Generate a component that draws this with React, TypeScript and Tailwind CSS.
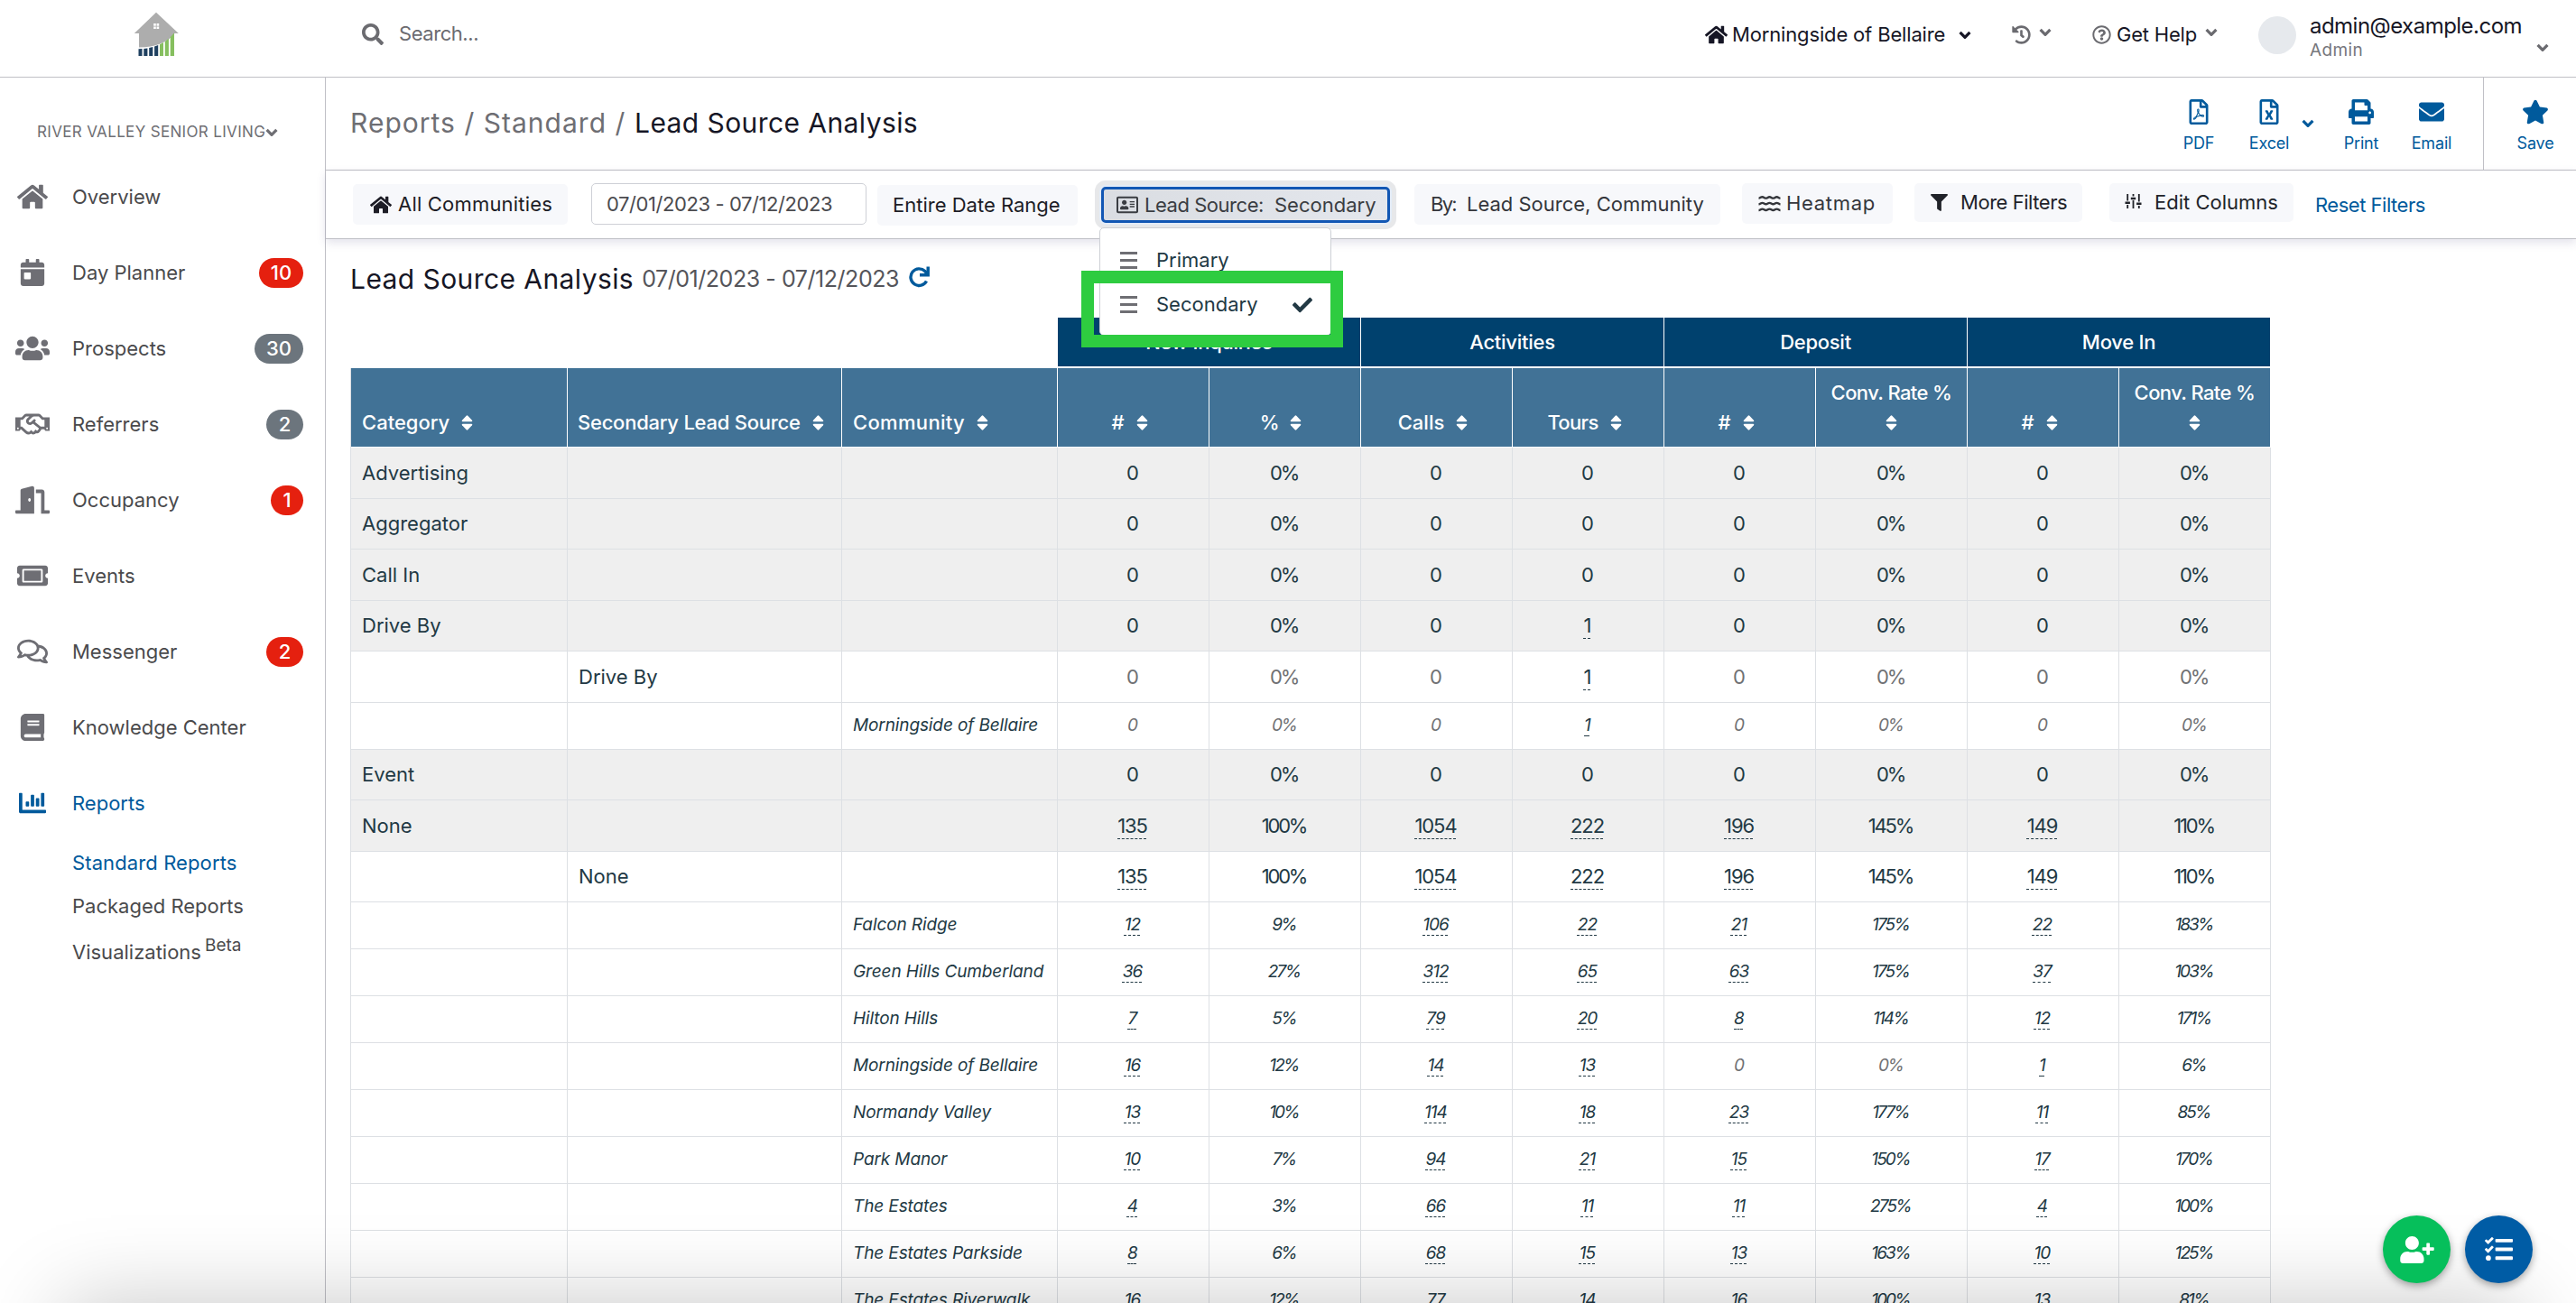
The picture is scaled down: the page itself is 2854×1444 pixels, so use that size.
import clsx from "clsx";
import type { ReactNode } from "react";
import type { IconType } from "react-icons";
import {
  FaBook,
  FaCalendarDay,
  FaChartBar,
  FaCheck,
  FaDoorOpen,
  FaEnvelope,
  FaFilter,
  FaHistory,
  FaHome,
  FaPrint,
  FaRegAddressCard,
  FaRegComments,
  FaRegFileExcel,
  FaRegFilePdf,
  FaRegHandshake,
  FaRegQuestionCircle,
  FaSearch,
  FaStar,
  FaTasks,
  FaTicketAlt,
  FaUserPlus,
  FaUsers,
} from "react-icons/fa";

type NavItem = {
  label: string;
  icon: IconType;
  iconClass: string;
  badge?: string;
  badgeClass?: string;
  active?: boolean;
};

const RED = "bg-[#e5200f]";
const GRAY = "bg-[#6c757d]";

const nav: NavItem[] = [
  { label: "Overview", icon: FaHome, iconClass: "size-[34px]" },
  { label: "Day Planner", icon: FaCalendarDay, iconClass: "size-[30px]", badge: "10", badgeClass: `${RED} w-[49px]` },
  { label: "Prospects", icon: FaUsers, iconClass: "size-[38px]", badge: "30", badgeClass: `${GRAY} w-[54px]` },
  { label: "Referrers", icon: FaRegHandshake, iconClass: "size-[38px]", badge: "2", badgeClass: `${GRAY} w-[41px]` },
  { label: "Occupancy", icon: FaDoorOpen, iconClass: "size-[38px]", badge: "1", badgeClass: `${RED} w-[36px]` },
  { label: "Events", icon: FaTicketAlt, iconClass: "size-[34px]" },
  { label: "Messenger", icon: FaRegComments, iconClass: "size-[34px]", badge: "2", badgeClass: `${RED} w-[41px]` },
  { label: "Knowledge Center", icon: FaBook, iconClass: "size-[30px]" },
  { label: "Reports", icon: FaChartBar, iconClass: "size-[30px]", active: true },
];

type Kind = "category" | "source" | "community";
type Row = { kind: Kind; name: string; values: string[]; height: string };

const zeros = ["0", "0%", "0", "0", "0", "0%", "0", "0%"];
const driveBy = ["0", "0%", "0", "1", "0", "0%", "0", "0%"];
const none = ["135", "100%", "1054", "222", "196", "145%", "149", "110%"];

const rows: Row[] = [
  { kind: "category", name: "Advertising", values: zeros, height: "h-[57px]" },
  { kind: "category", name: "Aggregator", values: zeros, height: "h-[56px]" },
  { kind: "category", name: "Call In", values: zeros, height: "h-[57px]" },
  { kind: "category", name: "Drive By", values: driveBy, height: "h-[56px]" },
  { kind: "source", name: "Drive By", values: driveBy, height: "h-[57px]" },
  { kind: "community", name: "Morningside of Bellaire", values: driveBy, height: "h-[52px]" },
  { kind: "category", name: "Event", values: zeros, height: "h-[56px]" },
  { kind: "category", name: "None", values: none, height: "h-[57px]" },
  { kind: "source", name: "None", values: none, height: "h-[56px]" },
  { kind: "community", name: "Falcon Ridge", values: ["12", "9%", "106", "22", "21", "175%", "22", "183%"], height: "h-[52px]" },
  { kind: "community", name: "Green Hills Cumberland", values: ["36", "27%", "312", "65", "63", "175%", "37", "103%"], height: "h-[52px]" },
  { kind: "community", name: "Hilton Hills", values: ["7", "5%", "79", "20", "8", "114%", "12", "171%"], height: "h-[52px]" },
  { kind: "community", name: "Morningside of Bellaire", values: ["16", "12%", "14", "13", "0", "0%", "1", "6%"], height: "h-[52px]" },
  { kind: "community", name: "Normandy Valley", values: ["13", "10%", "114", "18", "23", "177%", "11", "85%"], height: "h-[52px]" },
  { kind: "community", name: "Park Manor", values: ["10", "7%", "94", "21", "15", "150%", "17", "170%"], height: "h-[52px]" },
  { kind: "community", name: "The Estates", values: ["4", "3%", "66", "11", "11", "275%", "4", "100%"], height: "h-[52px]" },
  { kind: "community", name: "The Estates Parkside", values: ["8", "6%", "68", "15", "13", "163%", "10", "125%"], height: "h-[52px]" },
  { kind: "community", name: "The Estates Riverwalk", values: ["16", "12%", "77", "14", "16", "100%", "13", "81%"], height: "h-[52px]" },
];

const COLS = "grid grid-cols-[240px_304px_239px_repeat(8,168px)]";

function Chevron({ className }: { className?: string }) {
  return (
    <svg viewBox="0 0 14 10" className={clsx("h-[10px] w-[14px] shrink-0", className)} fill="none" stroke="currentColor" strokeWidth="3.2">
      <path d="M1.6 1.8 7 7.4l5.4-5.6" strokeLinejoin="round" />
    </svg>
  );
}

function SortIcon({ className }: { className?: string }) {
  return (
    <svg viewBox="0 0 12 17" className={clsx("h-[17px] w-[13px] shrink-0", className)} fill="currentColor">
      <path d="M6 .3c.3 0 .6.2.8.4l4.7 5.1c.6.7.2 1.5-.6 1.5H1.1C.3 7.3-.1 6.5.5 5.8L5.2.7c.2-.2.5-.4.8-.4z" />
      <path d="M6 16.7c.3 0 .6-.2.8-.4l4.7-5.1c.6-.7.2-1.5-.6-1.5H1.1c-.8 0-1.2.8-.6 1.5l4.7 5.1c.2.2.5.4.8.4z" />
    </svg>
  );
}

function Logo() {
  return (
    <svg viewBox="0 0 50 49" className="h-[49px] w-[50px]">
      <path d="M25 .8 49.8 24H45.5C38 34 24 39.5 6 39.5V24H.8z" fill="#adadad" />
      <path d="M22.2 13h2.6v2.7h-2.6zm3.4 0h2.6v2.7h-2.6zm-3.4 3.4h2.6v2.6h-2.6zm3.4 0h2.6v2.6h-2.6z" fill="#fff" />
      <path d="M5.5 41.2l4-.2v8h-4zM11.3 40.9l4.1-.5V49h-4.1zM17.2 40l4.1-.9V49h-4.1zM23.1 38.5l4.1-1.4V49h-4.1z" fill="#1f4060" />
      <path d="M29 36.3l4-2.2V49h-4zM34.8 33l4.1-3.2V49h-4.1zM40.7 28.2l4.3-4.6V49h-4.3z" fill="#86bf5f" />
    </svg>
  );
}

function Waves() {
  return (
    <svg viewBox="0 0 25 18" className="h-[18px] w-[25px]" fill="none" stroke="currentColor" strokeWidth="2.4">
      {[2, 8.7, 15.4].map((y) => (
        <path key={y} d={`M.5 ${y + 0.6}c2 0 2.2-1.4 4-1.4s2.2 1.4 4 1.4 2.2-1.4 4-1.4 2.2 1.4 4 1.4 2.2-1.4 4-1.4 2.2 1.4 4 1.4`} />
      ))}
    </svg>
  );
}

function Sliders() {
  return (
    <svg viewBox="0 0 19 18" className="-mt-[3px] h-[18px] w-[19px]" stroke="currentColor" strokeWidth="1.8" fill="none">
      <path d="M3.2 1v7.5M3.2 13v4M9.5 1v2.500M9.5 8v9M15.8 1v8.5M15.8 14v3" />
      <path d="M.5 10.7h5.4M6.8 6h5.4M13.1 11.7h5.4" strokeWidth="2.4" />
    </svg>
  );
}

function Bars() {
  return (
    <div className="flex w-[19px] flex-col gap-[5px]">
      <span className="h-[3px] bg-[#6e6e73]" />
      <span className="h-[3px] bg-[#6e6e73]" />
      <span className="h-[3px] bg-[#6e6e73]" />
    </div>
  );
}

function Header() {
  return (
    <header className="flex h-[86px] shrink-0 border-b border-[#c0c0c6] text-[22px] text-[#161625]">
      <div className="w-[401px] pt-[13px] pl-[148px]">
        <Logo />
      </div>
      <div className="flex h-[75px] w-[1488px] items-center text-[#6b6b70]">
        <FaSearch className="mr-[17px] size-[24px]" />
        <span className="tracking-[-0.02em]">Search...</span>
      </div>
      <div className="flex h-[77px] w-[340px] items-center">
        <FaHome className="mr-[5px] size-[25px]" />
        <span className="mr-[15px] w-[236px] tracking-[-0.007em] whitespace-nowrap">Morningside of Bellaire</span>
        <Chevron />
      </div>
      <div className="flex h-[76px] w-[89px] items-center text-[#6b6b70]">
        <FaHistory className="mr-[9px] size-[21px]" />
        <Chevron className="-mt-1" />
      </div>
      <div className="flex h-[76px] w-[184px] items-center">
        <FaRegQuestionCircle className="mr-[6px] size-[21px] text-[#6b6b70]" />
        <span className="mr-[8px] w-[90px] tracking-[-0.009em] whitespace-nowrap">Get Help</span>
        <Chevron className="-mt-1 text-[#6b6b70]" />
      </div>
      <div className="mt-[18px] mr-[15px] size-[42px] rounded-full bg-[#e6e9ed]" />
      <div className="w-[251px]">
        <div className="mt-[14px] text-[24px] leading-[30px] tracking-[-0.022em]">admin@example.com</div>
        <div className="text-[19px] leading-[24px] tracking-[0.019em] text-[#77777c]">Admin</div>
      </div>
      <Chevron className="mt-[48px] text-[#6b6b70]" />
    </header>
  );
}

function Sidebar() {
  return (
    <aside className="flex w-[361px] shrink-0 flex-col border-r border-[#c0c0c6] text-[22px] text-[#4a4a4c]">
      <div className="flex h-[90px] items-center pt-[31px] pl-[41px] text-[17px] text-[#6f6f74]">
        <span className="mr-[3px] w-[250px] tracking-[0.02em] whitespace-nowrap">RIVER VALLEY SENIOR LIVING</span>
        <Chevron />
      </div>
      {nav.map(({ label, icon: Icon, iconClass, badge, badgeClass, active }) => (
        <div key={label} className={clsx("flex h-[84px] items-center pr-[24px]", active && "text-[#005a9c]")}>
          <div className="flex w-[80px] justify-center pr-[9px]">
            <Icon className={clsx(iconClass, !active && "text-[#6e6e74]")} />
          </div>
          <span className="grow">{label}</span>
          {badge && (
            <span className={clsx("flex h-[33px] items-center justify-center rounded-full font-medium text-white", badgeClass)}>{badge}</span>
          )}
        </div>
      ))}
      <div className="flex flex-col pl-[80px]">
        <span className="h-[48px] leading-[48px] tracking-[0.005em] text-[#005a9c]">Standard Reports</span>
        <span className="h-[48px] leading-[48px]">Packaged Reports</span>
        <span className="flex h-[52px] leading-[54px]">
          Visualizations
          <span className="ml-[4px] text-[19px] leading-[40px]">Beta</span>
        </span>
      </div>
    </aside>
  );
}

function Action({ icon, label }: { icon: ReactNode; label: string }) {
  return (
    <div className="flex w-[78px] flex-col items-center pt-[22px]">
      <div className="flex h-[32px] items-center">{icon}</div>
      <span className="mt-[7px] text-[18px] leading-[24px] tracking-[-0.01em]">{label}</span>
    </div>
  );
}

function TitleBar() {
  return (
    <div className="flex h-[103px] shrink-0 border-b border-[#c0c0c6]">
      <h1 className="flex grow items-center pb-[2px] pl-[27px] text-[30px] whitespace-pre text-[#161625]">
        <span className="w-[315px] tracking-[0.034em] text-[#6e6e73]">Reports / Standard / </span>
        <span className="tracking-[0.014em]">Lead Source Analysis</span>
      </h1>
      <div className="flex pr-[18px] text-[#005a9c]">
        <Action icon={<FaRegFilePdf className="size-[28px]" />} label="PDF" />
        <Action icon={<FaRegFileExcel className="size-[28px]" />} label="Excel" />
        <div className="w-[24px] pt-[46px]">
          <Chevron className="-ml-[3px]" />
        </div>
        <Action icon={<FaPrint className="size-[28px]" />} label="Print" />
        <Action icon={<FaEnvelope className="size-[28px]" />} label="Email" />
      </div>
      <div className="flex w-[103px] border-l border-[#c0c0c6] pl-[18px] text-[#005a9c]">
        <Action icon={<FaStar className="size-[30px]" />} label="Save" />
      </div>
    </div>
  );
}

function FilterBar() {
  return (
    <div className="flex h-[76px] shrink-0 items-start border-b border-[#c0c0c6] text-[22px] whitespace-nowrap text-[#1d1d26] shadow-[0_4px_10px_rgba(70,60,120,0.15)]">
      <button className="mt-[15px] ml-[30px] flex h-[45px] w-[238px] items-center gap-[7px] rounded-[5px] bg-[#f7f8fb] pl-[19px]">
        <FaHome className="size-[24px]" />
        <span className="tracking-[0.009em]">All Communities</span>
      </button>
      <div className="mt-[14px] ml-[26px] flex h-[46px] w-[305px] items-center rounded-[5px] border border-[#ced0d6] pl-[16px] tracking-[-0.019em] text-[#4b4b4f]">
        07/01/2023 - 07/12/2023
      </div>
      <button className="mt-[16px] ml-[12px] flex h-[45px] w-[222px] items-center rounded-[5px] bg-[#f7f8fb] pl-[17px]">Entire Date Range</button>
      <button className="mt-[18px] ml-[26px] flex h-[40px] w-[320px] items-center rounded-[5px] border-[3px] border-[#1257b4] bg-linear-to-r from-[#dadde2] to-[#e4e7ed] pl-[14px] text-[#3a3d42] shadow-[0_0_0_2px_#e3ecf8,0_0_0_7px_#e7e8ea]">
        <FaRegAddressCard className="mr-[7px] size-[24px]" />
        <span className="w-[144px] text-left tracking-[-0.021em]">Lead Source:</span>
        <span>Secondary</span>
      </button>
      <button className="mt-[15px] ml-[27px] flex h-[45px] w-[339px] items-center rounded-[5px] bg-[#f7f8fb] pl-[18px] text-[#34363b]">
        <span className="w-[40px] text-left tracking-[-0.08em]">By:</span>
        <span>Lead Source, Community</span>
      </button>
      <button className="mt-[14px] ml-[24px] flex h-[45px] w-[167px] items-center gap-[6px] rounded-[5px] bg-[#f7f8fb] pl-[18px] text-[#34363b]">
        <Waves />
        <span className="tracking-[0.032em]">Heatmap</span>
      </button>
      <button className="mt-[14px] ml-[24px] flex h-[43px] w-[186px] items-center rounded-[5px] bg-[#f7f8fb] pl-[18px] text-[#212329]">
        <FaFilter className="mr-[14px] size-[19px]" />
        <span className="tracking-[-0.021em]">More Filters</span>
      </button>
      <button className="mt-[14px] ml-[30px] flex h-[43px] w-[204px] items-center gap-[14px] rounded-[5px] bg-[#f7f8fb] pl-[17px] text-[#212329]">
        <Sliders />
        <span>Edit Columns</span>
      </button>
      <a className="mt-[15px] ml-[24px] leading-[46px] tracking-[-0.022em] text-[#005a9c]">Reset Filters</a>
    </div>
  );
}

function HeadCell({ label, className }: { label: string; className?: string }) {
  return (
    <div className={clsx("flex items-end border-r border-white pb-[10px] leading-[33px]", className)}>
      {label}
      <SortIcon className="mb-[8px] ml-[13px]" />
    </div>
  );
}

function ConvHeadCell() {
  return (
    <div className="flex flex-col items-center justify-end border-r border-white pb-[18px]">
      <span className="mb-[9px] leading-[32px] tracking-[-0.027em]">Conv. Rate %</span>
      <SortIcon />
    </div>
  );
}

function DataRow({ row }: { row: Row }) {
  const isCategory = row.kind === "category";
  const isCommunity = row.kind === "community";
  const cell = "flex items-center border-r border-b border-[#dde0e4]";
  return (
    <div className={clsx(COLS, row.height, isCategory && "bg-[#efefef]", isCommunity ? "text-[19px] italic" : "text-[22px]")}>
      <div className={clsx(cell, "pl-[12px]")}>{isCategory && row.name}</div>
      <div className={clsx(cell, "pl-[12px]")}>{row.kind === "source" && row.name}</div>
      <div className={clsx(cell, "pl-[12px] tracking-[-0.006em] whitespace-nowrap")}>{isCommunity && row.name}</div>
      {row.values.map((value, i) => {
        const isRate = value.endsWith("%");
        const isZero = value === "0" || value === "0%";
        return (
          <div
            key={i}
            className={clsx(cell, "justify-center pr-[2px]", isRate ? "tracking-[-0.1em]" : "tracking-[-0.05em]", isZero && !isCategory && "text-[#707174]")}
          >
            <span
              className={clsx(
                !isRate && !isZero && "underline decoration-dashed decoration-1",
                isCommunity ? "underline-offset-[5px]" : "underline-offset-[6px]",
              )}
            >
              {value}
            </span>
          </div>
        );
      })}
    </div>
  );
}

function ReportTable() {
  return (
    <div className="w-[2128px] border-l border-[#dde0e4] text-[#223944]">
      <div className={clsx(COLS, "-ml-px h-[56px] bg-white pl-px text-[22px] font-medium tracking-[-0.012em] text-white")}>
        <div className="col-span-3 border-r border-white" />
        {["New Inquiries", "Activities", "Deposit", "Move In"].map((group) => (
          <div key={group} className="col-span-2 flex items-center justify-center border-r border-b-2 border-white bg-[#00416e]">
            {group}
          </div>
        ))}
      </div>
      <div className={clsx(COLS, "h-[88px] border-b border-white bg-[#417296] text-[22px] font-medium text-white")}>
        <HeadCell label="Category" className="pl-[12px]" />
        <HeadCell label="Secondary Lead Source" className="pl-[11px] tracking-[-0.011em] whitespace-nowrap" />
        <HeadCell label="Community" className="pl-[12px] tracking-[0.015em]" />
        <HeadCell label="#" className="justify-center pr-[8px]" />
        <HeadCell label="%" className="justify-center pr-[9px] tracking-[-0.05em]" />
        <HeadCell label="Calls" className="justify-center pr-[8px]" />
        <HeadCell label="Tours" className="justify-center pr-[8px] tracking-[-0.03em]" />
        <HeadCell label="#" className="justify-center pr-[8px]" />
        <ConvHeadCell />
        <HeadCell label="#" className="justify-center pr-[8px]" />
        <ConvHeadCell />
      </div>
      {rows.map((row, i) => (
        <DataRow key={i} row={row} />
      ))}
    </div>
  );
}

function LeadSourceMenu() {
  return (
    <>
      <div className="absolute top-[252px] left-[1218px] flex h-[120px] w-[257px] flex-col rounded-[5px] border border-[#cdd0d5] bg-white pt-[11px] text-[22px] text-[#223944]">
        <div className="flex h-[49px] items-center pl-[22px]">
          <Bars />
          <span className="ml-[21px]">Primary</span>
        </div>
        <div className="flex h-[49px] items-center pl-[22px]">
          <Bars />
          <span className="ml-[21px] w-[151px]">Secondary</span>
          <FaCheck className="size-[22px]" />
        </div>
      </div>
      {/* Highlight around the selected option */}
      <div className="absolute top-[300px] left-[1198px] h-[85px] w-[290px] border-[14px] border-[#2ecc40]" />
    </>
  );
}

export default function App() {
  return (
    <div className="relative flex h-[1444px] w-[2854px] flex-col overflow-hidden bg-white font-['Inter','Open_Sans',sans-serif]">
      <Header />
      <div className="flex min-h-0 grow">
        <Sidebar />
        <main className="flex min-w-0 grow flex-col">
          <TitleBar />
          <FilterBar />
          <div className="min-h-0 grow overflow-hidden pl-[27px]">
            <div className="flex h-[87px] items-center pt-[2px] whitespace-nowrap">
              <h2 className="text-[30px] tracking-[0.014em] text-[#161625]">Lead Source Analysis</h2>
              <span className="ml-[9px] w-[288px] text-[25px] tracking-[-0.018em] text-[#55555a]">07/01/2023 - 07/12/2023</span>
              <svg viewBox="0 0 24 24" className="mb-[6px] ml-[7px] size-[24px]" fill="none" stroke="#005a9c" strokeWidth="3.4">
                <path d="M20.5 16.5A9.3 9.3 0 1 1 18.8 5.5L21.5 8.5" />
                <path d="M22.2.5v9.2h-9.2" />
              </svg>
            </div>
            <ReportTable />
          </div>
        </main>
      </div>

      <LeadSourceMenu />

      {/* Soft shadow rising from the bottom edge */}
      <div className="pointer-events-none absolute top-[1444px] right-[60px] left-[70px] h-[300px] shadow-[0_0_90px_rgba(0,0,0,0.22)]" />

      <div className="absolute right-[48px] bottom-[22px] flex gap-[16px] text-white">
        <button className="flex size-[75px] items-center justify-center rounded-full bg-[#06bf5b] shadow-[0_3px_8px_rgba(0,0,0,0.35)]">
          <FaUserPlus className="h-[30px] w-[38px]" />
        </button>
        <button className="flex size-[75px] items-center justify-center rounded-full bg-[#005ca5] shadow-[0_3px_8px_rgba(0,0,0,0.35)]">
          <FaTasks className="size-[31px]" />
        </button>
      </div>
    </div>
  );
}
